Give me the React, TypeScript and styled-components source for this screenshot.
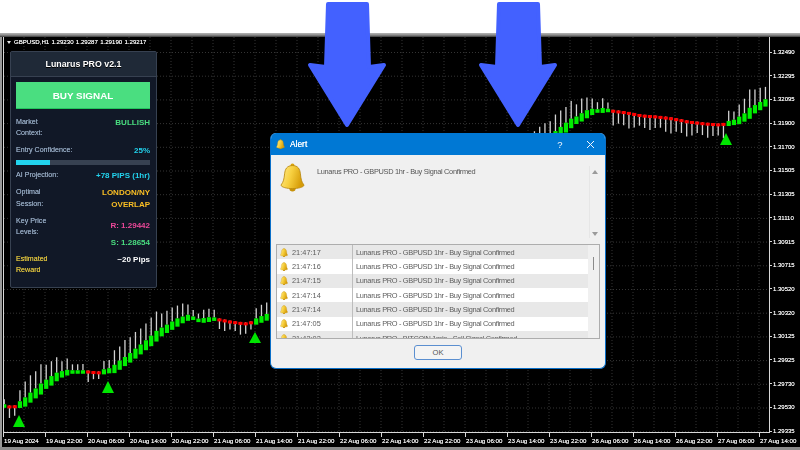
import React from 'react';
import styled, { createGlobalStyle } from 'styled-components';

const GlobalStyle = createGlobalStyle`
  html, body {
    margin: 0;
    width: 800px;
    height: 450px;
    overflow: hidden;
    background: #fff;
    font-family: "Liberation Sans", Arial, sans-serif;
  }
`;

const Shot = styled.div`
  position: relative;
  width: 800px;
  height: 450px;
  overflow: hidden;
`;

const Screen = styled.div`
  width: 800px;
  height: 450px;
  display: flex;
  flex-direction: column;
  filter: blur(0.35px);
`;

const WhiteStrip = styled.div`
  height: 33px;
  background: #fff;
`;

const Bevel = styled.div`
  height: 4px;
  background: linear-gradient(#b4b4b4, #8c8c8c 50%, #3a3a3a);
`;

const Terminal = styled.div`
  position: relative;
  flex: 1;
  display: grid;
  grid-template-columns: 768px 1fr;
  grid-template-rows: 396px 1fr;
  background: #000;
  border-left: 2px solid #9a9a9a;
`;

const ChartCell = styled.div`
  border-left: 1px solid #d8d8d8;
  border-right: 1px solid #d8d8d8;
  border-bottom: 1px solid #d8d8d8;
  margin-left: 1px;
  overflow: hidden;
`;

const ChartSvg = styled.svg`
  display: block;
  width: 764px;
  height: 396px;
`;

const PriceAxis = styled.div`
  display: flex;
  flex-direction: column;
  justify-content: space-between;
  padding: 11px 0 0;
  height: 398px;
  box-sizing: border-box;
  margin-bottom: -2px;
`;

const PriceLabel = styled.div`
  display: flex;
  align-items: center;
  gap: 1px;
  height: 8px;
  font-size: 6px;
  line-height: 8px;
  color: #eee;
  text-shadow: 0 0 0.5px #eee;
  &::before {
    content: '';
    width: 2px;
    height: 1px;
    background: #d8d8d8;
  }
`;

const TimeAxis = styled.div`
  display: flex;
  padding-left: 1px;
  grid-column: 1 / 3;
  height: 13px;
`;

const TimeLabel = styled.div`
  flex: 0 0 42px;
  box-sizing: border-box;
  padding-top: 4px;
  font-size: 6.2px;
  line-height: 8px;
  white-space: nowrap;
  color: #eee;
  text-shadow: 0 0 0.5px #eee;
  border-left: 1px solid #d8d8d8;
  height: 4px;
`;

const BottomStrip = styled.div`
  height: 3px;
  background: #8c8c8c;
`;

const Quote = styled.div`
  position: absolute;
  left: 5px;
  top: 1px;
  display: flex;
  align-items: center;
  gap: 3px;
  font-size: 6.1px;
  line-height: 8px;
  color: #eee;
  text-shadow: 0 0 0.5px #eee;
  white-space: nowrap;
  word-spacing: 0.6px;
`;

const QuoteCaret = styled.span`
  width: 0;
  height: 0;
  border-left: 2.5px solid transparent;
  border-right: 2.5px solid transparent;
  border-top: 3px solid #e6e6e6;
`;

const Panel = styled.div`
  position: absolute;
  left: 8px;
  top: 14px;
  width: 147px;
  height: 237px;
  box-sizing: border-box;
  background: #111827;
  border: 1px solid #374151;
  border-radius: 2px;
`;

const PanelHeader = styled.div`
  height: 25px;
  box-sizing: border-box;
  display: flex;
  align-items: center;
  justify-content: center;
  background: #1f2937;
  border-bottom: 1px solid #374151;
  font-size: 8.8px;
  font-weight: 700;
  color: #fff;
  text-shadow: 0 1px 0 #000;
`;

const PanelBody = styled.div`
  display: flex;
  flex-direction: column;
  gap: 5.6px;
  padding: 5px 6px 0 5px;
`;

const BuyButton = styled.div`
  height: 27px;
  margin-bottom: 2px;
  display: flex;
  align-items: center;
  justify-content: center;
  background: #4ade80;
  border-bottom: 1px solid #22c55e;
  box-sizing: border-box;
  font-size: 9.9px;
  font-weight: 700;
  color: #fff;
`;

const Row = styled.div`
  display: flex;
  justify-content: space-between;
  align-items: flex-start;
`;

const Label = styled.div<{ $accent?: boolean }>`
  font-size: 7.1px;
  line-height: 11.4px;
  color: ${(p) => (p.$accent ? '#d6bb3c' : '#8fa3bb')};
  text-shadow: 0 0 0.5px currentColor;
  white-space: nowrap;
`;

const Value = styled.div<{ $color: string; $gap?: number }>`
  font-size: 8px;
  line-height: 11.4px;
  font-weight: 700;
  text-align: right;
  white-space: nowrap;
  color: ${(p) => p.$color};
  margin-top: ${(p) => p.$gap ?? 0}px;
`;

const Meter = styled.div`
  height: 5px;
  margin-top: -2.4px;
  background: #374151;
`;

const MeterFill = styled.div`
  height: 100%;
  background: #22d3ee;
`;

const Dialog = styled.div`
  position: absolute;
  left: 268px;
  top: 96px;
  width: 336px;
  height: 236px;
  box-sizing: border-box;
  display: flex;
  flex-direction: column;
  background: #f0f0f0;
  border: 1px solid #0a6fc8;
  border-top: 0;
  border-radius: 6px;
  overflow: hidden;
`;

const TitleBar = styled.div`
  height: 22px;
  flex: none;
  display: flex;
  align-items: center;
  padding-left: 5px;
  background: #0078d4;
  color: #fff;
`;

const TitleText = styled.div`
  flex: 1;
  margin-left: 5px;
  font-size: 8.4px;
  text-shadow: 0 0 0.4px #fff;
`;

const TitleButton = styled.div`
  width: 30px;
  display: flex;
  justify-content: center;
  font-size: 9.5px;
  color: #f2f6fb;
`;

const DialogBody = styled.div`
  flex: 1;
  display: flex;
  flex-direction: column;
  padding: 0 5px;
`;

const Message = styled.div`
  height: 89px;
  flex: none;
  display: flex;
  box-sizing: border-box;
  padding: 8px 0 6px 4px;
`;

const MessageText = styled.div`
  flex: 1;
  margin-left: 12px;
  padding-top: 3.5px;
  font-size: 7.4px;
  letter-spacing: -0.32px;
  line-height: 10px;
  color: #555;
`;

const MessageScroll = styled.div`
  width: 10px;
  margin-top: 3px;
  display: flex;
  flex-direction: column;
  justify-content: space-between;
  align-items: center;
  padding: 4px 0 2px;
  border-left: 1px solid #e6e6e6;
`;

const ScrollArrow = styled.span<{ $down?: boolean }>`
  width: 0;
  height: 0;
  border-left: 3px solid transparent;
  border-right: 3px solid transparent;
  ${(p) => (p.$down ? 'border-top: 4px solid #9a9a9a;' : 'border-bottom: 4px solid #9a9a9a;')}
`;

const AlertList = styled.div`
  height: 95px;
  flex: none;
  display: flex;
  box-sizing: border-box;
  background: #f0f0f0;
  border: 1px solid #adadad;
  overflow: hidden;
`;

const AlertRows = styled.div`
  flex: 1;
  display: flex;
  flex-direction: column;
`;

const AlertRow = styled.div<{ $odd: boolean }>`
  height: 14.33px;
  flex: none;
  display: flex;
  align-items: center;
  background: ${(p) => (p.$odd ? '#e8e8e8' : '#fff')};
  font-size: 7.4px;
  color: #5c5c5c;
  white-space: nowrap;
`;

const TimeCell = styled.div`
  width: 76px;
  height: 100%;
  flex: none;
  display: flex;
  align-items: center;
  gap: 4px;
  padding-left: 3px;
  box-sizing: border-box;
  border-right: 1px solid #bdbdbd;
`;

const TextCell = styled.div`
  padding-left: 3px;
  letter-spacing: -0.32px;
`;

const ListScroll = styled.div`
  width: 11px;
  flex: none;
  display: flex;
  justify-content: center;
  padding-top: 12px;
`;

const ListThumb = styled.div`
  width: 1.5px;
  height: 13px;
  background: #8a8a8a;
`;

const DialogFooter = styled.div`
  flex: 1;
  display: flex;
  justify-content: center;
  padding-top: 6px;
`;

const OkButton = styled.div`
  width: 48px;
  height: 15px;
  box-sizing: border-box;
  display: flex;
  align-items: center;
  justify-content: center;
  background: #f4f4f4;
  border: 1px solid #5b8fd0;
  border-radius: 3px;
  font-size: 7.6px;
  color: #555;
`;

const Arrows = styled.svg`
  position: absolute;
  left: 0;
  top: 0;
  width: 800px;
  height: 135px;
`;

const prices = [
  '1.32490', '1.32295', '1.32095', '1.31900', '1.31700', '1.31505', '1.31305', '1.31110', '1.30915',
  '1.30715', '1.30520', '1.30320', '1.30125', '1.29925', '1.29730', '1.29530', '1.29335',
];

const times = [
  '19 Aug 2024', '19 Aug 22:00', '20 Aug 06:00', '20 Aug 14:00', '20 Aug 22:00', '21 Aug 06:00',
  '21 Aug 14:00', '21 Aug 22:00', '22 Aug 06:00', '22 Aug 14:00', '22 Aug 22:00', '23 Aug 06:00',
  '23 Aug 14:00', '23 Aug 22:00', '26 Aug 06:00', '26 Aug 14:00', '26 Aug 22:00', '27 Aug 06:00',
  '27 Aug 14:00',
];

const alerts = [
  ['21:47:17', 'Lunarus PRO - GBPUSD 1hr - Buy Signal Confirmed'],
  ['21:47:16', 'Lunarus PRO - GBPUSD 1hr - Buy Signal Confirmed'],
  ['21:47:15', 'Lunarus PRO - GBPUSD 1hr - Buy Signal Confirmed'],
  ['21:47:14', 'Lunarus PRO - GBPUSD 1hr - Buy Signal Confirmed'],
  ['21:47:14', 'Lunarus PRO - GBPUSD 1hr - Buy Signal Confirmed'],
  ['21:47:05', 'Lunarus PRO - GBPUSD 1hr - Buy Signal Confirmed'],
  ['21:42:02', 'Lunarus PRO - BITCOIN 1min - Sell Signal Confirmed'],
];

// body centre of the candles, in page pixels
const trend: [number, number][] = [
  [4, 406], [10, 407], [14, 407], [19, 405], [24, 403], [30, 398], [35, 394], [40, 390], [45, 385],
  [50, 382], [55, 378], [60, 375], [66, 373], [70, 372], [76, 372], [82, 372], [88, 372], [98, 373],
  [108, 371], [113, 370], [120, 365], [130, 358], [140, 350], [150, 342], [160, 333], [170, 327],
  [180, 321], [190, 317], [200, 321], [213, 319], [220, 320], [230, 322], [245, 324], [250, 323],
  [255, 322], [260, 320], [265, 318], [270, 316], [553, 138], [558, 134], [563, 130], [573, 122],
  [579, 119], [584, 116], [589, 113], [595, 111], [600, 111], [605, 110], [611, 111], [627, 113],
  [642, 116], [657, 117], [673, 119], [688, 122], [705, 124], [720, 125], [726, 124], [736, 122],
  [742, 119], [747, 116], [752, 111], [757, 108], [762, 105], [767, 102],
];

const redRanges = [[6, 16], [84, 103], [216, 252], [608, 724]];

const trendAt = (x: number) => {
  for (let i = 1; i < trend.length; i++) {
    if (x <= trend[i][0]) {
      const [x0, y0] = trend[i - 1];
      const [x1, y1] = trend[i];
      return y0 + ((x - x0) / (x1 - x0)) * (y1 - y0);
    }
  }
  return trend[trend.length - 1][1];
};

const candles = Array.from({ length: 146 }, (_, i) => {
  const x = 4.2 + i * 5.25;
  const y = trendAt(x);
  const slope = (trendAt(x - 2.6) - trendAt(x + 2.6)) / 5.2;
  const red = redRanges.some(([a, b]) => x >= a && x <= b);
  const jitter = 2 * Math.sin(i * 1.7) + Math.sin(i * 0.6);
  return { x, y, slope, red, jitter };
});

const triangles = [[19, 415, 427], [108, 381, 393], [255, 332, 343], [726, 133, 145]];

const BellIcon: React.FC<{ size: number; id: string }> = ({ size, id }) => (
  <svg width={size} height={size * 1.15} viewBox="0 0 24 28" style={{ flex: 'none' }}>
    <defs>
      <linearGradient id={id} x1="0" y1="0" x2="1" y2="0.3">
        <stop offset="0" stopColor="#ffeb90" />
        <stop offset="0.5" stopColor="#f7d040" />
        <stop offset="1" stopColor="#d69c08" />
      </linearGradient>
    </defs>
    <circle cx="12" cy="2.6" r="2" fill="#d9a20c" />
    <ellipse cx="12" cy="25.4" rx="3" ry="2.300" fill="#c8920a" />
    <path
      d="M12 2.500C6.500 2.500 4.800 6 4.300 10.500 3.800 15.500 3.200 18.500.8 21.500c0 2 6 3.500 11.200 3.500s11.200-1.500 11.200-3.500c-2.400-3-3-6-3.500-11C19.200 6 17.500 2.500 12 2.500Z"
      fill={`url(#${id})`}
      stroke="#b8860b"
      strokeWidth="0.8"
    />
  </svg>
);

const DownArrow: React.FC<{ dx: number }> = ({ dx }) => (
  <path
    transform={`translate(${dx} 0)`}
    d="M328 4 L367 4 L369 67 L384 65 L347 125 L310 65 L326 67 Z"
    fill="#4361ff"
    stroke="#4361ff"
    strokeWidth="4"
    strokeLinejoin="round"
  />
);

const Chart: React.FC = () => (
  <ChartSvg viewBox="4 37 764 396">
    {Array.from({ length: 37 }, (_, i) => (
      <line key={i} x1={3 + i * 21} x2={3 + i * 21} y1={37} y2={433} stroke="#343434" strokeDasharray="1 2" />
    ))}
    {prices.map((_, i) => (
      <line key={i} x1={4} x2={769} y1={52.5 + i * 23.7} y2={52.5 + i * 23.7} stroke="#343434" strokeDasharray="1 2" />
    ))}
    {candles.map((c) => {
      const bodyH = c.red ? 3 : Math.min(11, 3.5 + Math.max(c.slope, 0) * 8);
      const top = c.y - bodyH / 2;
      const wick = c.red
        ? 7 + c.jitter + (c.x > 600 ? 4 : 0)
        : 5 + Math.max(c.slope, 0) * 13 + Math.abs(c.jitter);
      return (
        <g key={c.x}>
          {c.red ? (
            <line x1={c.x} x2={c.x} y1={top} y2={top + bodyH + wick} stroke="#d2d2d2" strokeWidth="1.300" />
          ) : (
            <line x1={c.x} x2={c.x} y1={top - wick} y2={top} stroke="#d2d2d2" strokeWidth="1.300" />
          )}
          <rect x={c.x - 2.1} y={top} width={4.2} height={bodyH} fill={c.red ? '#ff0000' : '#00ee00'} />
        </g>
      );
    })}
    {triangles.map(([x, y0, y1]) => (
      <polygon key={x} points={`${x},${y0} ${x + 6},${y1} ${x - 6},${y1}`} fill="#00e600" />
    ))}
  </ChartSvg>
);

const SignalPanel: React.FC = () => (
  <Panel>
    <PanelHeader>Lunarus PRO v2.1</PanelHeader>
    <PanelBody>
      <BuyButton>BUY SIGNAL</BuyButton>
      <Row>
        <Label>Market<br />Context:</Label>
        <Value $color="#4ade80">BULLISH</Value>
      </Row>
      <Row>
        <Label>Entry Confidence:</Label>
        <Value $color="#22d3ee">25%</Value>
      </Row>
      <Meter>
        <MeterFill style={{ width: '25%' }} />
      </Meter>
      <Row>
        <Label>AI Projection:</Label>
        <Value $color="#22d3ee">+78 PIPS (1hr)</Value>
      </Row>
      <Row>
        <Label>Optimal<br />Session:</Label>
        <Value $color="#fbbf24">LONDON/NY<br />OVERLAP</Value>
      </Row>
      <Row>
        <Label>Key Price<br />Levels:</Label>
        <div>
          <Value $color="#ec4899" $gap={4}>R: 1.29442</Value>
          <Value $color="#4ade80" $gap={6}>S: 1.28654</Value>
        </div>
      </Row>
      <Row>
        <Label $accent>Estimated<br />Reward</Label>
        <Value $color="#ffffff">~20 Pips</Value>
      </Row>
    </PanelBody>
  </Panel>
);

const AlertDialog: React.FC = () => (
  <Dialog>
    <TitleBar>
      <BellIcon size={9} id="bell-title" />
      <TitleText>Alert</TitleText>
      <TitleButton>?</TitleButton>
      <TitleButton>
        <svg width="9" height="9" viewBox="0 0 9 9">
          <path d="M1 1l7 7M8 1L1 8" stroke="#f2f6fb" strokeWidth="1" />
        </svg>
      </TitleButton>
    </TitleBar>
    <DialogBody>
      <Message>
        <BellIcon size={25} id="bell-main" />
        <MessageText>Lunarus PRO - GBPUSD 1hr - Buy Signal Confirmed</MessageText>
        <MessageScroll>
          <ScrollArrow />
          <ScrollArrow $down />
        </MessageScroll>
      </Message>
      <AlertList>
        <AlertRows>
          {alerts.map(([time, text], i) => (
            <AlertRow key={i} $odd={i % 2 === 0}>
              <TimeCell>
                <BellIcon size={8} id={`bell-row-${i}`} />
                {time}
              </TimeCell>
              <TextCell>{text}</TextCell>
            </AlertRow>
          ))}
        </AlertRows>
        <ListScroll>
          <ListThumb />
        </ListScroll>
      </AlertList>
      <DialogFooter>
        <OkButton>OK</OkButton>
      </DialogFooter>
    </DialogBody>
  </Dialog>
);

const App: React.FC = () => (
  <Shot>
    <GlobalStyle />
    <Screen>
      <WhiteStrip />
      <Bevel />
      <Terminal>
        <ChartCell>
          <Chart />
        </ChartCell>
        <PriceAxis>
          {prices.map((p) => (
            <PriceLabel key={p}>{p}</PriceLabel>
          ))}
        </PriceAxis>
        <TimeAxis>
          {times.map((t) => (
            <TimeLabel key={t}>{t}</TimeLabel>
          ))}
        </TimeAxis>
        <Quote>
          <QuoteCaret />
          GBPUSD,H1 1.29230 1.29287 1.29190 1.29217
        </Quote>
        <SignalPanel />
        <AlertDialog />
      </Terminal>
      <BottomStrip />
    </Screen>
    <Arrows viewBox="0 0 800 135">
      <DownArrow dx={0} />
      <DownArrow dx={171} />
    </Arrows>
  </Shot>
);

export default App;
